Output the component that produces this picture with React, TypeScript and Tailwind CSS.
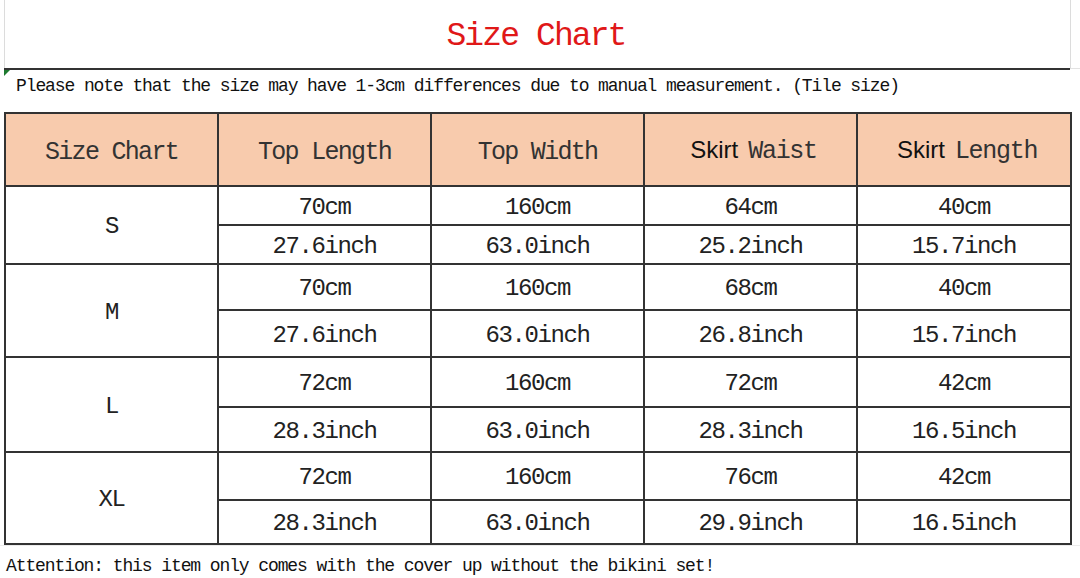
import React from 'react';

const mono = "font-['Liberation_Mono','Courier_New','Nimbus_Mono_PS','FreeMono','Liberation_Serif',serif]";

type Row = { size: string; cm: string[]; inch: string[]; h: [number, number] };

const rows: Row[] = [
  { size: 'S', cm: ['70cm', '160cm', '64cm', '40cm'], inch: ['27.6inch', '63.0inch', '25.2inch', '15.7inch'], h: [39, 39] },
  { size: 'M', cm: ['70cm', '160cm', '68cm', '40cm'], inch: ['27.6inch', '63.0inch', '26.8inch', '15.7inch'], h: [46, 47] },
  { size: 'L', cm: ['72cm', '160cm', '72cm', '42cm'], inch: ['28.3inch', '63.0inch', '28.3inch', '16.5inch'], h: [50, 45] },
  { size: 'XL', cm: ['72cm', '160cm', '76cm', '42cm'], inch: ['28.3inch', '63.0inch', '29.9inch', '16.5inch'], h: [48, 44] },
];

// SimSun-like look: mono glyphs, slightly squeezed
function Val({ children }: { children: React.ReactNode }) {
  return <span className={`${mono} inline-block pt-[4px] text-[24px] tracking-[-1.4px] text-[#222]`}>{children}</span>;
}

export default function App() {
  return (
    <div className="relative w-[1080px] h-[578px] bg-white overflow-hidden">
      {/* faint sheet gridlines */}
      <div className="absolute left-[4px] top-0 h-[68px] w-px bg-[#dcdcdc]" />
      <div className="absolute left-[1070px] top-0 h-[68px] w-px bg-[#dcdcdc]" />
      <div className="absolute left-[1070px] top-[68px] w-[10px] h-px bg-[#e2e2e2]" />
      <div className="absolute left-0 top-[545px] w-[1080px] h-px bg-[#ececec]" />

      {/* title */}
      <div className="h-[68px] flex items-center justify-center pt-[6px]">
        <span className={`${mono} text-[33px] tracking-[-1.9px] text-[#e01818] pr-[8px]`}>Size Chart</span>
      </div>

      {/* note row */}
      <div className="relative ml-[4px] w-[1066px] h-[44px] border-t-2 border-[#333]">
        <div className="absolute left-0 top-0 w-0 h-0 border-t-[6px] border-r-[6px] border-t-[#1e7a30] border-r-transparent" />
        <div className={`${mono} pl-[12px] pt-[3px] text-[18px] tracking-[-1.1px] text-[#111]`}>
          Please note that the size may have 1-3cm differences due to manual measurement. (Tile size)
        </div>
      </div>

      {/* table */}
      <table className="ml-[4px] w-[1066px] border-collapse table-fixed">
        <colgroup>
          <col className="w-[213px]" />
          <col className="w-[213px]" />
          <col className="w-[213px]" />
          <col className="w-[213px]" />
          <col className="w-[214px]" />
        </colgroup>
        <thead>
          <tr className="h-[73px] bg-[#f8cbad]">
            {['Size Chart', 'Top Length', 'Top Width'].map((t) => (
              <th key={t} className="border-2 border-[#333] font-normal p-0 pt-[6px]">
                <span className={`${mono} text-[25px] tracking-[-1.7px] text-[#333]`}>{t}</span>
              </th>
            ))}
            {['Waist', 'Length'].map((t) => (
              <th key={t} className="border-2 border-[#333] font-normal p-0 pt-[4px] pl-[6px]">
                <span className="inline-block font-['Liberation_Sans',Arial,sans-serif] text-[24px] text-[#111] mr-[10px]">Skirt</span>
                <span className={`${mono} text-[25px] tracking-[-1.3px] text-[#333]`}>{t}</span>
              </th>
            ))}
          </tr>
        </thead>
        <tbody>
          {rows.map((r) => (
            <React.Fragment key={r.size}>
              <tr style={{ height: r.h[0] }}>
                <td rowSpan={2} className="border-2 border-[#333] text-center p-0">
                  <Val>{r.size}</Val>
                </td>
                {r.cm.map((v, i) => (
                  <td key={i} className="border-2 border-[#333] text-center p-0 leading-none">
                    <Val>{v}</Val>
                  </td>
                ))}
              </tr>
              <tr style={{ height: r.h[1] }}>
                {r.inch.map((v, i) => (
                  <td key={i} className="border-2 border-[#333] text-center p-0 leading-none">
                    <Val>{v}</Val>
                  </td>
                ))}
              </tr>
            </React.Fragment>
          ))}
        </tbody>
      </table>

      {/* footer note */}
      <div className={`${mono} pl-[6px] pt-[8px] text-[18px] tracking-[-1.1px] text-[#111]`}>
        Attention: this item only comes with the cover up without the bikini set!
      </div>
    </div>
  );
}
